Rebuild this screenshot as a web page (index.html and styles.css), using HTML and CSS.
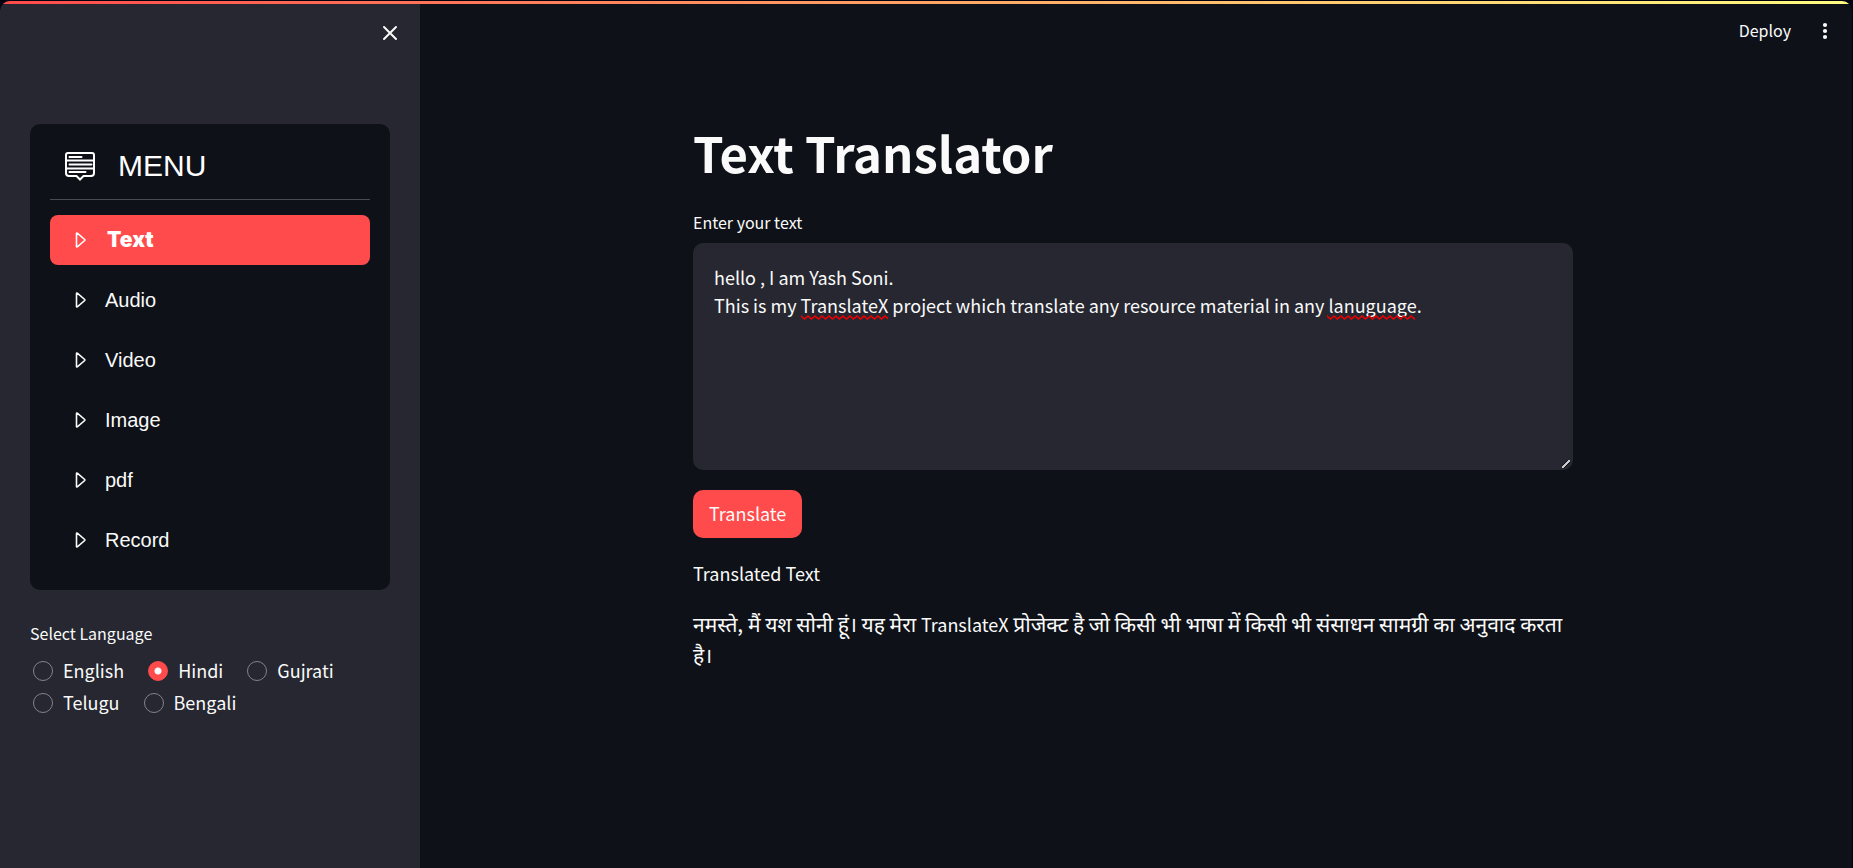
FILE: index.html
```html
<!DOCTYPE html>
<html lang="en">
<head>
<meta charset="utf-8">
<meta name="viewport" content="width=device-width, initial-scale=1">
<title>Text Translator</title>
<link rel="stylesheet" href="styles.css">
</head>
<body>
<svg class="sprite" aria-hidden="true">
  <symbol id="caret" viewBox="0 0 20 20"><path d="M6.500 3.600v12.800c0 .5.5.7.8.4l7.400-6.300c.3-.3.3-.7 0-1L7.300 3.200c-.3-.3-.8-.1-.8.4z" fill="none" stroke="currentColor" stroke-width="1.600"/></symbol>
</svg>
<div class="app">
  <aside class="sidebar">
    <div class="sidebar-top">
      <button class="icon-button" type="button" aria-label="Close sidebar">
        <svg width="16" height="16" viewBox="0 0 16 16"><path d="M2 2l12 12M14 2L2 14" stroke="currentColor" stroke-width="2" stroke-linecap="round"/></svg>
      </button>
    </div>
    <nav class="menu" aria-label="Menu">
      <div class="menu-header">
        <svg width="32" height="30" viewBox="0 0 32 30" fill="none" stroke="currentColor">
          <path d="M4 2h24a2 2 0 0 1 2 2v18a3 3 0 0 1-3 3h-7.500l-3.500 3.500L12.500 25H5a3 3 0 0 1-3-3V4a2 2 0 0 1 2-2z" stroke-width="2"/>
          <path d="M2 9.500h28M2 17.500h28" stroke-width="1.800"/>
          <path d="M5.500 6h12M5.500 13.500h22M5.500 21h16" stroke-width="2" stroke-linecap="round"/>
        </svg>
        <span>MENU</span>
      </div>
      <ul class="menu-list">
        <li><a class="menu-item active" href="#text" aria-current="page"><svg class="caret"><use href="#caret"/></svg>Text</a></li>
        <li><a class="menu-item" href="#audio"><svg class="caret"><use href="#caret"/></svg>Audio</a></li>
        <li><a class="menu-item" href="#video"><svg class="caret"><use href="#caret"/></svg>Video</a></li>
        <li><a class="menu-item" href="#image"><svg class="caret"><use href="#caret"/></svg>Image</a></li>
        <li><a class="menu-item" href="#pdf"><svg class="caret"><use href="#caret"/></svg>pdf</a></li>
        <li><a class="menu-item" href="#record"><svg class="caret"><use href="#caret"/></svg>Record</a></li>
      </ul>
    </nav>
    <fieldset class="languages">
      <legend class="field-label">Select Language</legend>
      <div class="radio-group">
        <label class="radio"><input type="radio" name="language"><span>English</span></label>
        <label class="radio"><input type="radio" name="language" checked><span>Hindi</span></label>
        <label class="radio"><input type="radio" name="language"><span>Gujrati</span></label>
        <label class="radio"><input type="radio" name="language"><span>Telugu</span></label>
        <label class="radio"><input type="radio" name="language"><span>Bengali</span></label>
      </div>
    </fieldset>
  </aside>
  <div class="page">
    <header class="toolbar">
      <button class="deploy" type="button">Deploy</button>
      <button class="icon-button" type="button" aria-label="More options">
        <svg width="16" height="20" viewBox="0 0 16 20" fill="currentColor"><circle cx="8" cy="4" r="2.100"/><circle cx="8" cy="10" r="2.100"/><circle cx="8" cy="16" r="2.100"/></svg>
      </button>
    </header>
    <main class="content">
      <h1>Text Translator</h1>
      <label class="field-label" for="source">Enter your text</label>
      <div class="editor">
        <textarea id="source" spellcheck="false">hello , I am Yash Soni.
This is my TranslateX project which translate any resource material in any lanuguage.</textarea>
        <svg class="squiggle squiggle-first" width="87" height="5" aria-hidden="true">
          <defs><pattern id="wave" width="7" height="5" patternUnits="userSpaceOnUse"><path d="M-1.750 2.500L0 1l3.500 3L7 1l1.750 1.500" fill="none" stroke="#f00000" stroke-width="1.500"/></pattern></defs>
          <rect width="87" height="5" fill="url(#wave)"/>
        </svg>
        <svg class="squiggle squiggle-second" width="88" height="5" aria-hidden="true"><rect width="88" height="5" fill="url(#wave)"/></svg>
      </div>
      <button class="primary" type="button">Translate</button>
      <p>Translated Text</p>
      <p class="translation" lang="hi">नमस्ते, मैं यश सोनी हूं। यह मेरा <span class="latin" lang="en">TranslateX</span> प्रोजेक्ट है जो किसी भी भाषा में किसी भी संसाधन सामग्री का अनुवाद करता है।</p>
    </main>
  </div>
</div>
</body>
</html>
```
FILE: styles.css
```css
:root {
  --bg: #0e1117;
  --panel: #262730;
  --accent: #ff4b4b;
  --text: #fafafa;
  --sans: "Noto Sans CJK SC", "Noto Sans", sans-serif;
  --arial: "Liberation Sans", Arial, sans-serif;
}

* { box-sizing: border-box; }

body {
  margin: 0;
  padding: 1px 1px 0 0;
  background: #020210;
  color: var(--text);
  font: 18px/32px var(--sans);
}

.sprite { position: absolute; width: 0; height: 0; }

.app {
  position: relative;
  display: flex;
  min-height: calc(100vh - 1px);
  border-radius: 10px 10px 0 0;
  overflow: hidden;
  background: var(--bg);
}

.app::before {
  content: "";
  position: absolute;
  inset: 0 0 auto;
  height: 3px;
  background: linear-gradient(90deg, #ff4b4b, #fffd80);
}

button {
  border: 0;
  background: none;
  color: inherit;
  font: inherit;
  cursor: pointer;
}

.icon-button {
  display: flex;
  padding: 4px;
}

.sidebar {
  flex: 0 0 420px;
  padding: 20px 30px;
  background: var(--panel);
}

.sidebar-top {
  display: flex;
  justify-content: flex-end;
  height: 103px;
  margin-right: -12px;
}

.menu {
  padding: 20px 20px 25px;
  border-radius: 10px;
  background: var(--bg);
  font-family: var(--arial);
}

.menu-header {
  display: flex;
  align-items: center;
  gap: 22px;
  height: 56px;
  padding: 0 14px 11px;
  border-bottom: 1px solid #4a4b50;
  font-size: 30px;
  color: #fff;
}

.menu-list {
  display: grid;
  gap: 10px;
  margin: 15px 0 0;
  padding: 0;
  list-style: none;
}

.menu-item {
  display: flex;
  align-items: center;
  gap: 15px;
  height: 50px;
  padding: 0 20px;
  border-radius: 8px;
  color: var(--text);
  font-size: 20px;
  text-decoration: none;
}

.menu-item.active {
  gap: 17px;
  background: var(--accent);
  font-family: Inter, var(--arial);
  font-size: 21px;
  font-weight: 900;
  color: #fff;
}

.caret { width: 20px; height: 20px; }

.languages {
  margin: 29px 0 0;
  padding: 0;
  border: 0;
}

.field-label {
  display: block;
  padding: 0;
  font-size: 16px;
  line-height: 28px;
}

.radio-group {
  display: flex;
  flex-wrap: wrap;
  column-gap: 24px;
  margin-top: 8px;
  padding-left: 3px;
}

.radio {
  display: flex;
  align-items: center;
  gap: 10px;
  height: 32px;
}

.radio span { padding-bottom: 2px; }

.radio input {
  appearance: none;
  width: 20px;
  height: 20px;
  margin: 0;
  border: 1px solid #82838a;
  border-radius: 50%;
}

.radio input:checked {
  border-color: var(--accent);
  background: radial-gradient(circle, #fafafa 3px, var(--accent) 4px);
}

.page {
  flex: 1;
  min-width: 0;
}

.toolbar {
  display: flex;
  justify-content: flex-end;
  align-items: center;
  gap: 16px;
  height: 60px;
  padding-right: 15px;
}

.deploy {
  padding: 0 6px 2px;
  font-size: 16px;
}

.content {
  width: 100%;
  max-width: 960px;
  margin: 0 auto;
  padding: 58px 43px 40px 37px;
}

h1 {
  margin: 0 0 23px;
  font-size: 49px;
  font-weight: 700;
  line-height: 66px;
}

.editor {
  position: relative;
  display: flex;
  margin: 7px 0 20px;
}

textarea {
  width: 100%;
  height: 227px;
  padding: 20px 21px;
  border: 0;
  border-radius: 10px;
  background: var(--panel);
  color: var(--text);
  font: 18px/28px var(--sans);
  resize: vertical;
}

textarea::-webkit-resizer {
  background: linear-gradient(135deg, transparent 32%, #0e1117 32% 42%, #c8c8c8 42% 60%, #0e1117 60% 68%, transparent 68%) 4px 5px / 8px 8px no-repeat;
}

.squiggle {
  position: absolute;
  top: 72px;
  pointer-events: none;
}

.squiggle-first { left: 108px; }
.squiggle-second { left: 634px; }

.primary {
  display: block;
  height: 48px;
  padding: 0 16px 2px;
  border-radius: 10px;
  background: var(--accent);
}

p { margin: 19px 0 0; }

.translation {
  font-size: 21px;
  line-height: 31px;
}

.latin {
  font-size: 18px;
  line-height: 1;
}
```
